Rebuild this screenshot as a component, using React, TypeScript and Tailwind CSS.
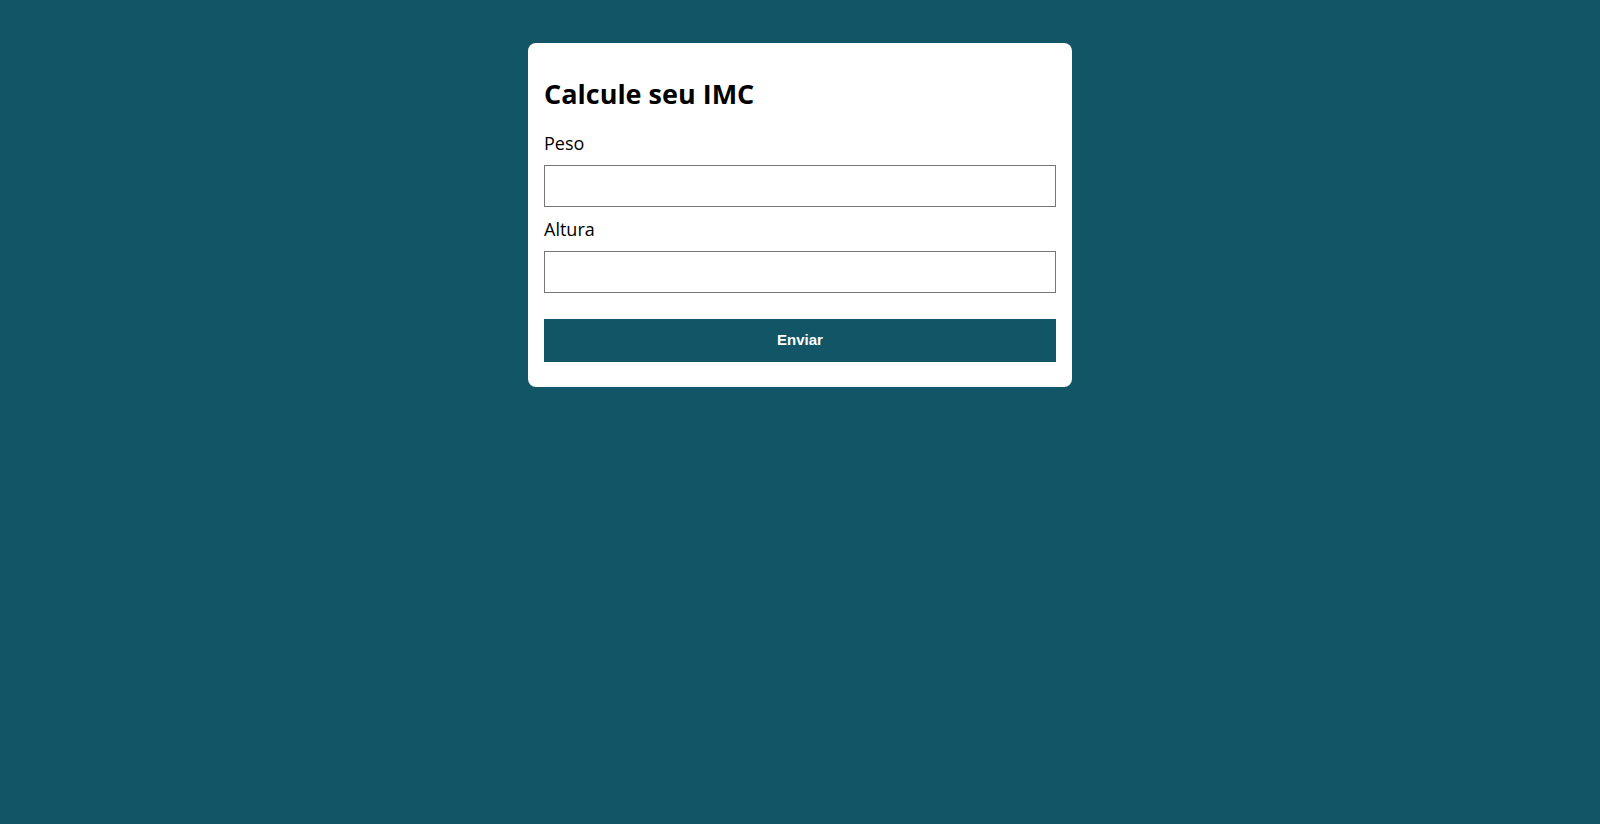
export default function App() {
  return (
    <div className="min-h-screen w-full bg-[#125566] pt-[43px]">
      {/* Card */}
      <form
        className="mx-auto w-[544px] rounded-lg bg-white px-4 pt-4 pb-[25px] font-['Open_Sans',sans-serif]"
        onSubmit={(e) => e.preventDefault()}
      >
        <h1 className="mt-4 text-[27px] font-bold leading-[38px] text-black">Calcule seu IMC</h1>

        <label htmlFor="peso" className="mt-[18px] block text-[18px] leading-6 text-black">
          Peso
        </label>
        <input
          id="peso"
          type="text"
          className="mt-[10px] block h-[42px] w-full border border-[#767676] bg-white px-2 outline-none"
        />

        <label htmlFor="altura" className="mt-[10px] block text-[18px] leading-6 text-black">
          Altura
        </label>
        <input
          id="altura"
          type="text"
          className="mt-[10px] block h-[42px] w-full border border-[#767676] bg-white px-2 outline-none"
        />

        <button
          type="submit"
          className="mt-[26px] block h-[43px] w-full bg-[#125566] font-['Liberation_Sans',Arial,sans-serif] text-[15px] font-bold text-white"
        >
          Enviar
        </button>
      </form>
    </div>
  );
}
